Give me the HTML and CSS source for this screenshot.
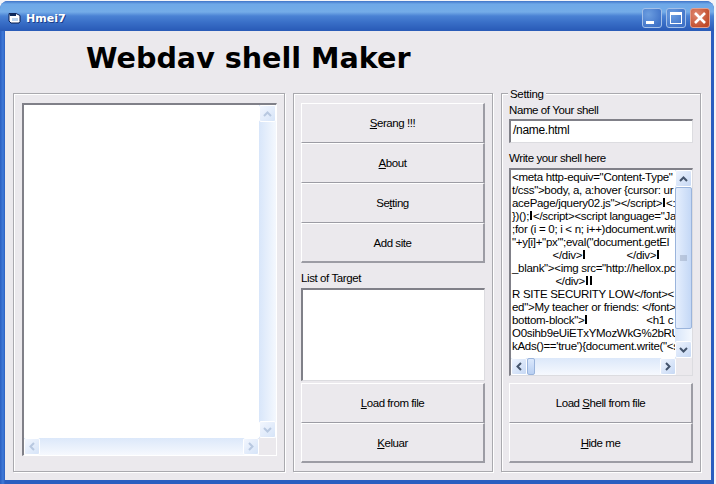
FILE: index.html
```html
<!DOCTYPE html>
<html>
<head>
<meta charset="utf-8">
<title>Hmei7</title>
<link rel="stylesheet" href="styles.css">
</head>
<body>
<div class="window">
  <div class="titlebar">
    <svg class="appicon" width="13" height="12" viewBox="0 0 13 12"><path d="M1 1.500h7l4 2v6l-1 1.500H3L1 9z" fill="#fff" stroke="#0a1e50"/><path d="M1 1.500h7v2.500H2z" fill="#0e2a5c"/><path d="M4 6h6v3H4z" fill="#bcd4ee"/></svg>
    <span class="wintitle">Hmei7</span>
    <div class="wincontrols">
      <div class="wbtn"><span class="glyph-min"></span></div>
      <div class="wbtn"><span class="glyph-max"></span></div>
      <div class="wbtn close"><svg width="14" height="14" viewBox="0 0 14 14"><path d="M2 2l10 10M12 2L2 12" stroke="#fff" stroke-width="2.6"/></svg></div>
    </div>
  </div>
  <div class="client">
    <h1 class="apptitle">Webdav shell Maker</h1>
    <div class="groups">
      <section class="group group-left">
        <div class="listframe">
          <div class="listbody">
            <div class="listarea"></div>
            <div class="vbar dim">
              <div class="sbtn"><svg width="9" height="6" viewBox="0 0 9 6"><path d="M1 5l3.500-3.500L8 5" fill="none" stroke="#b8c8e0" stroke-width="2"/></svg></div>
              <div class="track"></div>
              <div class="sbtn"><svg width="9" height="6" viewBox="0 0 9 6"><path d="M1 1l3.500 3.500L8 1" fill="none" stroke="#b8c8e0" stroke-width="2"/></svg></div>
            </div>
          </div>
          <div class="hbar dim">
            <div class="sbtn"><svg width="6" height="9" viewBox="0 0 6 9"><path d="M5 1L1.500 4.500 5 8" fill="none" stroke="#b8c8e0" stroke-width="2"/></svg></div>
            <div class="htrack"></div>
            <div class="sbtn"><svg width="6" height="9" viewBox="0 0 6 9"><path d="M1 1l3.500 3.500L1 8" fill="none" stroke="#b8c8e0" stroke-width="2"/></svg></div>
            <div class="corner"></div>
          </div>
        </div>
      </section>
      <section class="group group-mid">
        <div class="btnstack">
          <button class="btn"><u>S</u>erang !!!</button>
          <button class="btn"><u>A</u>bout</button>
          <button class="btn">Se<u>t</u>ting</button>
          <button class="btn">Add site</button>
        </div>
        <label class="lbl lbl-target">List of Target</label>
        <div class="targetbox"></div>
        <div class="btnstack bottomstack">
          <button class="btn"><u>L</u>oad from file</button>
          <button class="btn"><u>K</u>eluar</button>
        </div>
      </section>
      <section class="group group-right">
        <span class="legend">Setting</span>
        <label class="lbl lbl-name">Name of Your shell</label>
        <div class="namebox">/name.html</div>
        <label class="lbl lbl-write">Write your shell here</label>
        <div class="editor">
          <div class="editor-top">
            <div class="code">
              <div class="codeline">&lt;meta http-equiv="Content-Type"</div>
              <div class="codeline">t/css"&gt;body, a, a:hover {cursor: ur</div>
              <div class="codeline">acePage/jquery02.js"&gt;&lt;/script&gt;<i class="ctl"></i>&lt;:</div>
              <div class="codeline">})();<i class="ctl"></i>&lt;/script&gt;&lt;script language="Ja</div>
              <div class="codeline">;for (i = 0; i &lt; n; i++)document.write</div>
              <div class="codeline">"+y[i]+"px"';eval("document.getEl</div>
              <div class="codeline">              &lt;/div&gt;<i class="ctl"></i>              &lt;/div&gt;<i class="ctl"></i></div>
              <div class="codeline">_blank"&gt;&lt;img src="http://hellox.pc</div>
              <div class="codeline">               &lt;/div&gt;<i class="ctl"></i><i class="ctl"></i></div>
              <div class="codeline">R SITE SECURITY LOW&lt;/font&gt;&lt;</div>
              <div class="codeline">ed"&gt;My teacher or friends: &lt;/font&gt;</div>
              <div class="codeline">bottom-block"&gt;<i class="ctl"></i>                    &lt;h1 c</div>
              <div class="codeline">O0sihb9eUiETxYMozWkG%2bRU</div>
              <div class="codeline">kAds()=='true'){document.write("&lt;s</div>
            </div>
            <div class="vbar live">
              <div class="sbtn"><svg width="9" height="6" viewBox="0 0 9 6"><path d="M1 5l3.500-3.500L8 5" fill="none" stroke="#44546c" stroke-width="2"/></svg></div>
              <div class="thumb"><svg width="7" height="7" viewBox="0 0 7 7"><path d="M0 1h7M0 3h7M0 5h7" stroke="#9aa8c0"/></svg></div>
              <div class="track"></div>
              <div class="sbtn"><svg width="9" height="6" viewBox="0 0 9 6"><path d="M1 1l3.500 3.500L8 1" fill="none" stroke="#44546c" stroke-width="2"/></svg></div>
            </div>
          </div>
          <div class="hbar live">
            <div class="sbtn"><svg width="6" height="9" viewBox="0 0 6 9"><path d="M5 1L1.500 4.500 5 8" fill="none" stroke="#44546c" stroke-width="2"/></svg></div>
            <div class="hthumb"></div>
            <div class="htrack"></div>
            <div class="sbtn"><svg width="6" height="9" viewBox="0 0 6 9"><path d="M1 1l3.500 3.500L1 8" fill="none" stroke="#44546c" stroke-width="2"/></svg></div>
            <div class="corner"></div>
          </div>
        </div>
        <div class="btnstack bottomstack">
          <button class="btn">Load <u>S</u>hell from file</button>
          <button class="btn"><u>H</u>ide me</button>
        </div>
      </section>
    </div>
  </div>
</div>
</body>
</html>
```

FILE: styles.css
```css
* { box-sizing: border-box; }
html, body { margin: 0; padding: 0; }
body {
  width: 716px;
  height: 484px;
  overflow: hidden;
  background: #f4f4f8;
  font-family: "Liberation Sans", Arial, sans-serif;
  font-size: 12px;
  color: #000;
  padding-top: 1px;
}
.window {
  width: 714px;
  height: 483px;
  display: flex;
  flex-direction: column;
  background: linear-gradient(90deg, #2a5ec0 0, #3f7ad8 3px, #2a5ec0 5px);
  border-radius: 8px 8px 0 0;
  overflow: hidden;
}
.titlebar {
  height: 30px;
  flex: none;
  display: flex;
  align-items: center;
  padding: 4px 4px 0 8px;
  background: linear-gradient(180deg, #3f74c8 0, #6ea8e8 3px, #74ace8 11px, #4a82d4 15px, #3a70c8 21px, #2a5cb8 29px);
}
.appicon { margin-right: 5px; }
.wintitle {
  color: #fff;
  font-family: "DejaVu Sans", sans-serif;
  font-weight: bold;
  font-size: 11px;
  text-shadow: 1px 1px #1c3f8c;
}
.wincontrols { margin-left: auto; display: flex; gap: 4px; }
.wbtn {
  width: 20px;
  height: 20px;
  border: 1px solid #a4c0e8;
  border-radius: 3px;
  background: radial-gradient(circle at 30% 30%, #6c9ee0, #3f72c8 80%);
  display: flex;
  align-items: center;
  justify-content: center;
}
.wbtn.close { background: radial-gradient(circle at 30% 30%, #e08870, #c04a28 80%); border-color: #e0a090; }
.glyph-min { width: 8px; height: 3px; background: #fff; margin-top: 8px; margin-right: 4px; }
.glyph-max { width: 12px; height: 12px; border: 1px solid #fff; border-top-width: 3px; }
.client {
  flex: 1;
  margin: 0 3px 4px 5px;
  background: #ebe9ed;
  display: flex;
  flex-direction: column;
  padding: 0 10px 8px 8px;
}
.apptitle {
  margin: 0 0 0 73px;
  height: 62px;
  line-height: 54px;
  font-family: "DejaVu Sans", sans-serif;
  font-size: 28.600px;
  font-weight: bold;
  white-space: nowrap;
  flex: none;
}
.groups { flex: 1; display: flex; gap: 8px; min-height: 0; }
.group {
  border: 1px solid #a9a9ae;
  box-shadow: inset 1px 1px #fff, 1px 1px #fff;
  display: flex;
  flex-direction: column;
  position: relative;
}
.group-left { width: 272px; padding: 9px 7px 15px 8px; }
.group-mid { width: 200px; padding: 9px 7px 7px 7px; }
.group-right { width: 200px; padding: 9px 7px 7px 7px; }
.legend {
  position: absolute;
  top: -6px;
  left: 6px;
  background: #ebe9ed;
  padding: 0 2px;
  line-height: 12px;
  font-size: 11.500px;
  letter-spacing: -0.300px;
}
.listframe {
  flex: 1;
  display: flex;
  flex-direction: column;
  border-top: 2px solid #808088;
  border-left: 2px solid #808088;
  border-right: 1px solid #fff;
  border-bottom: 1px solid #fff;
  background: #fff;
  min-height: 0;
}
.listbody { flex: 1; display: flex; min-height: 0; }
.listarea { flex: 1; background: #fff; }
.vbar {
  width: 17px;
  flex: none;
  display: flex;
  flex-direction: column;
  background: linear-gradient(90deg, #d8e6fa, #f4f8fe);
}
.track { flex: 1; }
.hbar {
  height: 17px;
  flex: none;
  display: flex;
  background: linear-gradient(180deg, #dce8fa, #f6f9fe);
}
.htrack { flex: 1; }
.corner { width: 17px; background: #ebe9ed; }
.sbtn {
  width: 16px;
  height: 17px;
  flex: none;
  display: flex;
  align-items: center;
  justify-content: center;
  border: 1px solid #fff;
  border-radius: 2px;
  background: linear-gradient(135deg, #eef4fe, #c6d8f4);
}
.vbar .sbtn { width: 17px; }
.dim .sbtn { background: linear-gradient(135deg, #f2f6fe, #d6e4f8); }
.thumb {
  height: 142px;
  flex: none;
  border: 1px solid #9ab4dc;
  border-radius: 2px;
  background: linear-gradient(90deg, #e6effd, #c4d8f6);
  display: flex;
  align-items: center;
  justify-content: center;
}
.hthumb {
  width: 8px;
  flex: none;
  border: 1px solid #9ab4dc;
  border-radius: 2px;
  background: linear-gradient(180deg, #dbe8fc, #b8cff2);
}
.live .corner { width: 16px; }
.btnstack { display: flex; flex-direction: column; flex: none; }
.btn {
  height: 40px;
  width: 100%;
  background: #ebe9ed;
  border: 0;
  border-top: 1px solid #fff;
  border-left: 1px solid #fff;
  border-right: 2px solid #9c9ca4;
  border-bottom: 1px solid #9c9ca4;
  font-family: "Liberation Sans", Arial, sans-serif;
  font-size: 11.500px;
  letter-spacing: -0.450px;
  color: #000;
  padding: 0;
}
.btn:last-child { border-bottom-width: 2px; }
.lbl { display: block; line-height: 14px; font-size: 11.500px; letter-spacing: -0.400px; white-space: nowrap; }
.lbl-target { margin-top: 8px; height: 17px; }
.lbl-name { height: 16px; }
.lbl-write { margin-top: 8px; height: 17px; }
.targetbox {
  height: 93px;
  flex: none;
  background: #fff;
  border-top: 2px solid #808088;
  border-left: 2px solid #808088;
  border-right: 1px solid #dcdce0;
  border-bottom: 1px solid #dcdce0;
}
.namebox {
  height: 24px;
  flex: none;
  background: #fff;
  border-top: 2px solid #808088;
  border-left: 2px solid #808088;
  border-right: 1px solid #dcdce0;
  border-bottom: 1px solid #dcdce0;
  padding-left: 2px;
  line-height: 18px;
  letter-spacing: -0.300px;
}
.bottomstack { margin-top: 2px; }
.editor {
  height: 208px;
  flex: none;
  display: flex;
  flex-direction: column;
  background: #fff;
  border-top: 2px solid #808088;
  border-left: 2px solid #808088;
  border-right: 1px solid #dcdce0;
  border-bottom: 1px solid #dcdce0;
  margin-bottom: 5px;
}
.editor-top { flex: 1; display: flex; min-height: 0; }
.code {
  flex: 1;
  min-width: 0;
  overflow: hidden;
  padding: 1px 0 0 1px;
  line-height: 13px;
  font-size: 11.500px;
  letter-spacing: -0.300px;
}
.codeline { white-space: pre; height: 13px; }
.ctl { display: inline-block; width: 2px; height: 9px; margin: 0 1px; background: #000; }
```
